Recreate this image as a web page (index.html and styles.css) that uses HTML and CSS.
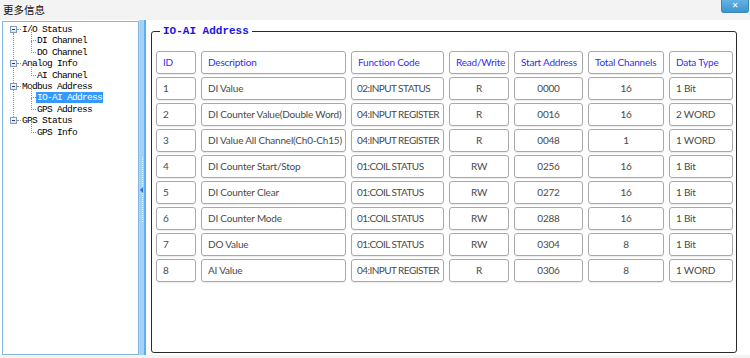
FILE: index.html
```html
<!DOCTYPE html>
<html lang="zh">
<head>
  <meta charset="UTF-8">
  <title>更多信息</title>
  <link rel="stylesheet" href="styles.css">
</head>
<body>
  <div class="titlebar">
    <span class="title">更多信息</span>
    <button class="close">&#x2715;</button>
  </div>
  <div class="main">
    <div class="tree-panel">
      <ul class="tree">
        <li><span class="exp"></span><span class="label">I/O Status</span>
          <ul>
            <li><span class="label">DI Channel</span></li>
            <li><span class="label">DO Channel</span></li>
          </ul>
        </li>
        <li><span class="exp"></span><span class="label">Analog Info</span>
          <ul>
            <li><span class="label">AI Channel</span></li>
          </ul>
        </li>
        <li><span class="exp"></span><span class="label">Modbus Address</span>
          <ul>
            <li><span class="label selected">IO-AI Address</span></li>
            <li><span class="label">GPS Address</span></li>
          </ul>
        </li>
        <li><span class="exp"></span><span class="label">GPS Status</span>
          <ul>
            <li><span class="label">GPS Info</span></li>
          </ul>
        </li>
      </ul>
    </div>
    <div class="splitter"><div class="grip"></div></div>
    <div class="content">
      <fieldset class="group">
        <legend>IO-AI Address</legend>
        <div class="grid">
          <div class="cell head">ID</div>
          <div class="cell head">Description</div>
          <div class="cell head">Function Code</div>
          <div class="cell head">Read/Write</div>
          <div class="cell head">Start Address</div>
          <div class="cell head">Total Channels</div>
          <div class="cell head">Data Type</div>

          <div class="cell">1</div>
          <div class="cell">DI Value</div>
          <div class="cell fc">02:INPUT STATUS</div>
          <div class="cell c">R</div>
          <div class="cell c">0000</div>
          <div class="cell c">16</div>
          <div class="cell">1 Bit</div>

          <div class="cell">2</div>
          <div class="cell">DI Counter Value(Double Word)</div>
          <div class="cell fc">04:INPUT REGISTER</div>
          <div class="cell c">R</div>
          <div class="cell c">0016</div>
          <div class="cell c">16</div>
          <div class="cell">2 WORD</div>

          <div class="cell">3</div>
          <div class="cell">DI Value All Channel(Ch0-Ch15)</div>
          <div class="cell fc">04:INPUT REGISTER</div>
          <div class="cell c">R</div>
          <div class="cell c">0048</div>
          <div class="cell c">1</div>
          <div class="cell">1 WORD</div>

          <div class="cell">4</div>
          <div class="cell">DI Counter Start/Stop</div>
          <div class="cell fc">01:COIL STATUS</div>
          <div class="cell c">RW</div>
          <div class="cell c">0256</div>
          <div class="cell c">16</div>
          <div class="cell">1 Bit</div>

          <div class="cell">5</div>
          <div class="cell">DI Counter Clear</div>
          <div class="cell fc">01:COIL STATUS</div>
          <div class="cell c">RW</div>
          <div class="cell c">0272</div>
          <div class="cell c">16</div>
          <div class="cell">1 Bit</div>

          <div class="cell">6</div>
          <div class="cell">DI Counter Mode</div>
          <div class="cell fc">01:COIL STATUS</div>
          <div class="cell c">RW</div>
          <div class="cell c">0288</div>
          <div class="cell c">16</div>
          <div class="cell">1 Bit</div>

          <div class="cell">7</div>
          <div class="cell">DO Value</div>
          <div class="cell fc">01:COIL STATUS</div>
          <div class="cell c">RW</div>
          <div class="cell c">0304</div>
          <div class="cell c">8</div>
          <div class="cell">1 Bit</div>

          <div class="cell">8</div>
          <div class="cell">AI Value</div>
          <div class="cell fc">04:INPUT REGISTER</div>
          <div class="cell c">R</div>
          <div class="cell c">0306</div>
          <div class="cell c">8</div>
          <div class="cell">1 WORD</div>
        </div>
      </fieldset>
    </div>
  </div>
</body>
</html>
```

FILE: styles.css
```css
body {
  margin: 0;
  width: 750px;
  height: 358px;
  overflow: hidden;
  background-color: #f3f3f3;
  font-family: Lato, "Noto Sans CJK SC", sans-serif;
}
.titlebar {
  height: 20px;
  display: flex;
  justify-content: space-between;
  align-items: flex-start;
}
.title {
  padding-left: 3px;
  font: 10.5px/19px "Noto Sans CJK SC", sans-serif;
  color: #111;
}
.close {
  width: 28px;
  height: 13px;
  margin-right: 1px;
  padding: 0;
  border: 1px solid #3a86bd;
  border-top: none;
  border-radius: 0 0 3px 3px;
  background: linear-gradient(#62b2e2, #3f95cd);
  color: #fff;
  font: bold 8px/12px "DejaVu Sans", sans-serif;
}
.main {
  height: 335px;
  display: flex;
  padding-left: 2px;
  box-sizing: border-box;
  background-color: #fff;
}

/* tree */
.tree-panel {
  width: 137px;
  margin-top: 1px;
  border: 1px solid #86b6df;
  box-sizing: border-box;
  background-color: #fff;
}
.tree, .tree ul {
  list-style: none;
  margin: 0;
  padding: 0;
}
.tree {
  position: relative;
  padding-top: 2px;
  font: 9.5px/11.4px "Liberation Mono", monospace;
  letter-spacing: -0.7px;
  color: #000;
}
.tree::before {
  content: "";
  position: absolute;
  left: 10px;
  top: 11px;
  height: 84px;
  border-left: 1px dotted #8f8f8f;
}
.tree > li {
  position: relative;
  padding-left: 18px;
}
.tree > li::before {
  content: "";
  position: absolute;
  left: 14px;
  top: 5px;
  width: 4px;
  border-top: 1px dotted #8f8f8f;
}
.tree ul {
  padding-left: 15px;
}
.tree ul li {
  position: relative;
}
.tree ul li::before {
  content: "";
  position: absolute;
  left: -5px;
  top: -6px;
  width: 4px;
  height: 11px;
  border-left: 1px dotted #8f8f8f;
  border-bottom: 1px dotted #8f8f8f;
}
.exp {
  position: absolute;
  left: 7px;
  top: 2px;
  width: 7px;
  height: 7px;
  box-sizing: border-box;
  border: 1px solid #7f9db9;
  background: linear-gradient(#fff, #dbe3ec);
  z-index: 1;
}
.exp::after {
  content: "";
  position: absolute;
  left: 1px;
  top: 2px;
  width: 3px;
  height: 1px;
  background-color: #1e3c70;
}
.label {
  padding: 0 1px;
}
.label.selected {
  background-color: #3399ff;
  color: #fff;
}

/* splitter */
.splitter {
  width: 7px;
  border-left: 1px solid #b5d3ea;
  border-right: 2px solid #5cb0f2;
  box-sizing: border-box;
  background-color: #a2d3f6;
  display: flex;
  align-items: center;
  justify-content: center;
}
.grip {
  position: relative;
  height: 65px;
  margin-top: 3px;
  border-left: 1px dotted #e8f5ff;
}
.grip::after {
  content: "";
  position: absolute;
  left: -3px;
  top: 30px;
  border-right: 3px solid #2f6fd0;
  border-top: 3px solid transparent;
  border-bottom: 3px solid transparent;
}

/* content */
.content {
  flex: 1;
  padding: 5px 0 0 5px;
}
.group {
  width: 586px;
  height: 328px;
  margin: 0;
  padding: 0 0 0 4px;
  box-sizing: border-box;
  border: 1px solid #2a2a2a;
  border-radius: 3px;
}
.group legend {
  margin-left: 4px;
  padding: 0 3px;
  font: bold 11px/12px "Liberation Mono", monospace;
  color: #1414e6;
}
.grid {
  margin-top: 14px;
  display: grid;
  grid-template-columns: 40px 145px 93px 60px 69px 76px 64px;
  grid-auto-rows: 23px;
  column-gap: 5px;
  row-gap: 3px;
}
.cell {
  padding-left: 6px;
  border: 1px solid #a9a9a9;
  border-radius: 3px;
  box-shadow: 0 1px 1px rgba(0, 0, 0, 0.08);
  font-size: 10px;
  letter-spacing: -0.2px;
  line-height: 21px;
  color: #4a4a4a;
  white-space: nowrap;
  overflow: hidden;
}
.cell.head {
  color: #3030f0;
}
.cell.fc {
  padding-left: 5px;
  letter-spacing: -0.55px;
}
.cell.c {
  padding-left: 0;
  text-align: center;
}
```
